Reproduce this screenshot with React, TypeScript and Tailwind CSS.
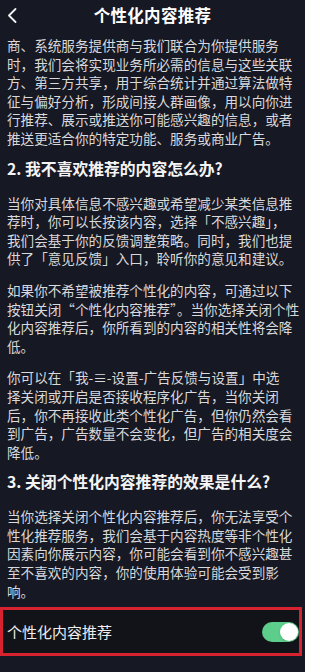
import React from 'react';

const font = { fontFamily: '"Noto Sans CJK SC", "Noto Sans", sans-serif' };

type Block = { kind: 'h' | 'p'; lines: string[] };

const blocks: Block[] = [
  {
    kind: 'p',
    lines: [
      '商、系统服务提供商与我们联合为你提供服务',
      '时，我们会将实现业务所必需的信息与这些关联',
      '方、第三方共享，用于综合统计并通过算法做特',
      '征与偏好分析，形成间接人群画像，用以向你进',
      '行推荐、展示或推送你可能感兴趣的信息，或者',
      '推送更适合你的特定功能、服务或商业广告。',
    ],
  },
  { kind: 'h', lines: ['2. 我不喜欢推荐的内容怎么办?'] },
  {
    kind: 'p',
    lines: [
      '当你对具体信息不感兴趣或希望减少某类信息推',
      '荐时，你可以长按该内容，选择「不感兴趣」，',
      '我们会基于你的反馈调整策略。同时，我们也提',
      '供了「意见反馈」入口，聆听你的意见和建议。',
    ],
  },
  {
    kind: 'p',
    lines: [
      '如果你不希望被推荐个性化的内容，可通过以下',
      '按钮关闭“个性化内容推荐”。当你选择关闭个性',
      '化内容推荐后，你所看到的内容的相关性将会降',
      '低。',
    ],
  },
  {
    kind: 'p',
    lines: [
      '你可以在「我-≡-设置-广告反馈与设置」中选',
      '择关闭或开启是否接收程序化广告，当你关闭',
      '后，你不再接收此类个性化广告，但你仍然会看',
      '到广告，广告数量不会变化，但广告的相关度会',
      '降低。',
    ],
  },
  { kind: 'h', lines: ['3. 关闭个性化内容推荐的效果是什么?'] },
  {
    kind: 'p',
    lines: [
      '当你选择关闭个性化内容推荐后，你无法享受个',
      '性化推荐服务，我们会基于内容热度等非个性化',
      '因素向你展示内容，你可能会看到你不感兴趣甚',
      '至不喜欢的内容，你的使用体验可能会受到影',
      '响。',
    ],
  },
];

function gapBefore(i: number) {
  if (i === 0) return '';
  const prev = blocks[i - 1].kind;
  const cur = blocks[i].kind;
  if (cur === 'h') return 'mt-[10px]';
  if (prev === 'h') return 'mt-[14px]';
  return 'mt-[13px]';
}

export default function App() {
  return (
    <div className="w-[305px] h-[672px] overflow-hidden bg-[#161823] text-white" style={font}>
      {/* header */}
      <div className="relative h-[36px] pt-[4px] flex justify-center">
        <svg className="absolute left-[7px] top-[8px]" width="10" height="15" viewBox="0 0 10 15" fill="none">
          <path d="M8.5 1 L2 7.5 L8.5 14" stroke="#f2f2f2" strokeWidth="1.8" strokeLinecap="round" strokeLinejoin="round" />
        </svg>
        <h1 className="text-[16.5px] leading-[22px] font-bold tracking-[0.3px]">个性化内容推荐</h1>
      </div>

      <div className="px-[7px] flex flex-col">
        {blocks.map((b, i) =>
          b.kind === 'h' ? (
            <h2 key={i} className={`${gapBefore(i)} text-[15.8px] leading-[22px] font-semibold text-[#f4f4f5]`}>
              {b.lines[0]}
            </h2>
          ) : (
            <p key={i} className={`${gapBefore(i)} text-[13.6px] leading-[18.6px] text-[#d9d9dc] whitespace-nowrap`}>
              {b.lines.map((line, k) => (
                <span key={k} className="block">
                  {line}
                </span>
              ))}
            </p>
          )
        )}
      </div>

      {/* toggle row */}
      <div className="mt-[7px] w-[302px] h-[49px] border-[3px] border-[#d7232f] bg-[#121319] flex items-center justify-between pl-[4px]">
        <span className="text-[15px] text-[#ededee]">个性化内容推荐</span>
        <div className="w-[37px] h-[20px] rounded-full bg-[#5ccd8b] flex items-center justify-end pr-[1px]">
          <div className="w-[18px] h-[18px] rounded-full bg-white shadow" />
        </div>
      </div>
    </div>
  );
}
